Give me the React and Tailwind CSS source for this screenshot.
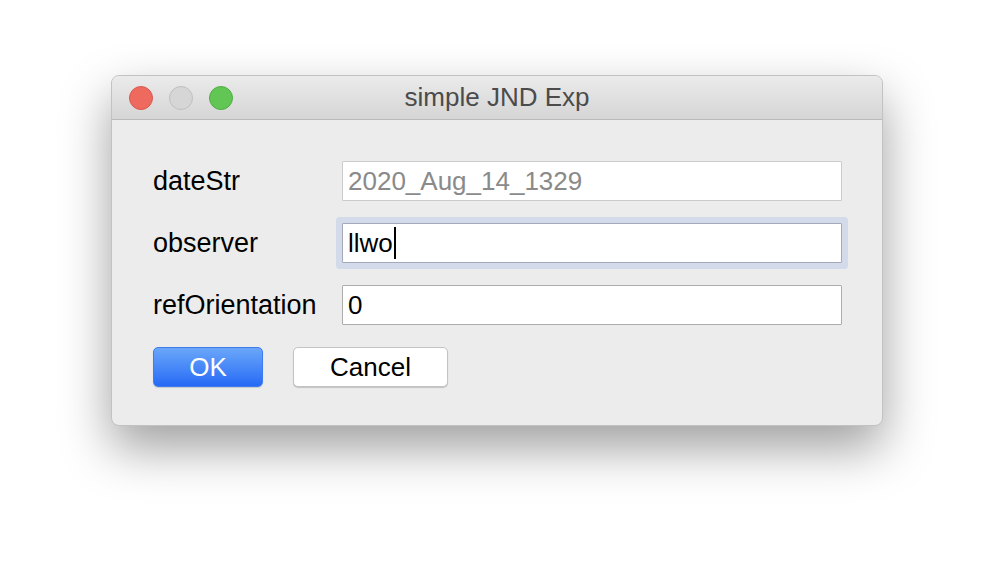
import React from 'react';

const font = { fontFamily: '"Liberation Sans", Arial, sans-serif' };

const Field = ({ label, value, variant }) => {
    let box = 'border-[#acacac]';
    let text = 'text-black';
    if (variant === 'disabled') {
        box = 'border-[#cbcbcb]';
        text = 'text-[#8a8a8a]';
    }
    if (variant === 'focus') {
        box = 'border-[#a4aaba] ring-[6px] ring-[#d3dae9]';
    }
    return (
        <div className="flex items-center h-[40px]">
            <div className="w-[189px] text-[27px] text-black leading-none pt-[1px]">{label}</div>
            <div className={`w-[500px] h-[40px] bg-white border ${box} flex items-center px-[5px] rounded-[1px]`}>
                <span className={`text-[26px] leading-none ${text}`}>{value}</span>
                {variant === 'focus' && <span className="w-[2px] h-[32px] bg-black ml-[1px]" />}
            </div>
        </div>
    );
};

const App = () => {
    return (
        <div className="w-[994px] h-[574px] bg-white pt-[75px] pl-[111px]" style={font}>
            <div className="w-[772px] h-[351px] rounded-[8px] border border-[#c2c2c2] bg-[#ececec] shadow-[0_22px_50px_rgba(0,0,0,0.38)] overflow-hidden flex flex-col">
                {/* title bar */}
                <div className="h-[44px] shrink-0 bg-gradient-to-b from-[#ebebeb] to-[#d5d5d5] border-b border-[#b9b9b9] flex items-center relative">
                    <div className="flex gap-[16px] pl-[17px]">
                        <span className="w-[24px] h-[24px] rounded-full bg-[#ee6a5f] border border-[#d9574d]" />
                        <span className="w-[24px] h-[24px] rounded-full bg-[#d6d6d6] border border-[#bfbfbf]" />
                        <span className="w-[24px] h-[24px] rounded-full bg-[#62c654] border border-[#4fae42]" />
                    </div>
                    <div className="absolute inset-0 flex items-center justify-center text-[26px] text-[#4b4b4b] pointer-events-none">
                        simple JND Exp
                    </div>
                </div>

                {/* body */}
                <div className="flex flex-col pl-[41px] pt-[41px] gap-[22px]">
                    <Field label="dateStr" value="2020_Aug_14_1329" variant="disabled" />
                    <Field label="observer" value="llwo" variant="focus" />
                    <Field label="refOrientation" value="0" />
                    <div className="flex gap-[30px]">
                        <button className="w-[110px] h-[40px] rounded-[5px] bg-gradient-to-b from-[#6ba6f9] to-[#2769f5] border border-[#3d7cf0] text-white text-[26px] leading-none shadow-[0_1px_1px_rgba(0,0,0,0.15)]">
                            OK
                        </button>
                        <button className="w-[155px] h-[40px] rounded-[5px] bg-white border border-[#c3c3c3] text-black text-[26px] leading-none shadow-[0_1px_1px_rgba(0,0,0,0.18)]">
                            Cancel
                        </button>
                    </div>
                </div>
            </div>
        </div>
    );
};

export default App;
